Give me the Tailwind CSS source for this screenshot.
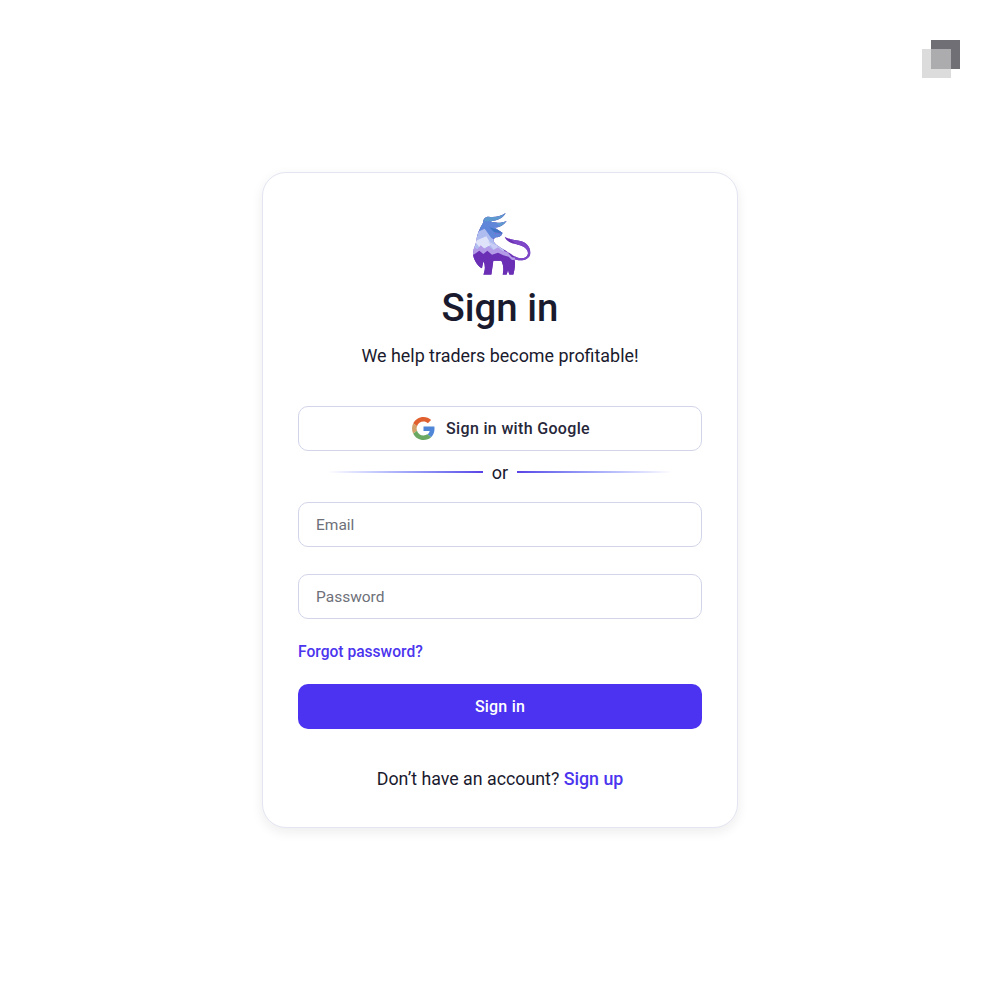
<!DOCTYPE html>
<html lang="en">
<head>
<meta charset="utf-8">
<title>Sign in</title>
<script src="https://cdn.jsdelivr.net/npm/@tailwindcss/browser@4"></script>
</head>
<body class="bg-white font-['Roboto',sans-serif] text-[#1a1a2e]">
<div class="relative h-[1000px] w-[1000px] flex justify-center pt-[172px]">
  <div class="absolute left-[922px] top-[40px] h-[38px] w-[38px]">
    <div class="absolute right-0 top-0 h-[29px] w-[29px] bg-[#6f6f75]"></div>
    <div class="absolute left-0 bottom-0 h-[29px] w-[29px] bg-[#cbcbcb]/67"></div>
  </div>
  <main class="h-[656px] w-[476px] rounded-[24px] border border-[#e3e5f2] bg-white px-[35px] pt-[35px] shadow-[0_4px_12px_rgba(20,20,43,0.08)] flex flex-col">
    <svg class="mx-auto h-[72px] w-[66px] shrink-0" viewBox="-3 0 198 216" aria-hidden="true">
      <defs>
        <clipPath id="bullshape">
          <path d="M45 45 C45 34 50 26 62 26 C78 28 98 26 113 15 C106 30 88 38 66 40 C82 46 100 46 116 39 C106 54 92 60 78 58 L103 74 C103 82 94 88 84 88 C78 90 76 96 78 102 C84 112 100 120 114 128 C126 136 138 146 150 149 C164 153 178 150 180 136 C180 122 166 114 150 110 C134 106 114 102 110 86 C122 94 142 96 160 100 C178 106 188 120 187 136 C186 150 172 157 158 157 C150 157 144 156 140 154 C142 170 140 186 136 200 L124 200 L120 186 L116 200 L104 200 C108 184 106 170 100 158 L76 158 C74 172 72 186 70 200 L46 200 C52 186 52 172 47 160 C45 166 43 172 42 181 C30 176 18 156 15 140 C14 126 22 114 25 100 C26 82 34 62 45 45 Z"/>
        </clipPath>
      </defs>
      <g clip-path="url(#bullshape)">
        <rect x="0" y="0" width="198" height="216" fill="#6a2fb4"/>
        <rect x="0" y="0" width="198" height="60" fill="#5e9ad0"/>
        <polygon points="30,40 80,40 110,70 100,92 20,92" fill="#5f86d8"/>
        <polygon points="10,80 50,62 70,90 90,100 110,130 10,130" fill="#aebcf0"/>
        <polygon points="20,100 55,85 70,110 40,125" fill="#dfe3fa"/>
        <polygon points="60,100 85,112 115,135 80,130" fill="#c9cdf5"/>
        <polygon points="0,150 0,130 18,118 28,124 38,112 50,122 62,114 76,126 90,118 104,128 118,132 132,148 150,150 150,156 60,156" fill="#b39be8"/>
        <polygon points="0,160 0,146 20,138 34,128 46,138 58,128 72,140 90,134 106,142 122,146 134,158 150,160 150,216 0,216" fill="#6a2fb4"/>
        <polygon points="108,80 198,80 198,170 145,170 140,146 160,120" fill="#7d47c8"/>
        <polygon points="64,58 104,70 104,78 78,72" fill="#3f74c4"/>
      </g>
      <circle cx="82" cy="76" r="1.500" fill="#a14fc4"/>
      <circle cx="90" cy="76" r="1.500" fill="#a14fc4"/>
      <circle cx="96" cy="75" r="1.500" fill="#a14fc4"/>
    </svg>
    <h1 class="mt-[3px] text-center text-[38.4px] leading-[50px] font-medium">Sign in</h1>
    <p class="mt-[9px] text-center text-[17.9px] leading-[28px]">We help traders become profitable!</p>
    <button class="mt-[36px] flex h-[45px] w-full items-center justify-center gap-[11px] rounded-[10px] border border-[#d2d5ea] bg-white pl-[2px] text-[16px] font-medium text-[#27273a] tracking-[0.33px]">
      <svg class="h-[23px] w-[23px]" viewBox="0 0 48 48" aria-hidden="true">
        <path fill="#e0602f" d="M24 9.5c3.5 0 6.7 1.3 9.1 3.5l6.8-6.8C35.8 2.4 30.2 0 24 0 14.6 0 6.5 5.4 2.6 13.2l7.900 6.200C12.400 13.600 17.700 9.500 24 9.500z"/>
        <path fill="#4f86d8" d="M47 24.500c0-1.600-.2-3.100-.4-4.500H24v9h12.900c-.6 3-2.200 5.500-4.700 7.200l7.700 6c4.500-4.200 7.100-10.300 7.100-17.700z"/>
        <path fill="#d3a26a" d="M10.500 28.600c-.5-1.400-.8-3-.8-4.600s.3-3.200.8-4.600l-7.900-6.200C.9 16.500 0 20.100 0 24s.9 7.500 2.600 10.800l7.900-6.200z"/>
        <path fill="#6aa864" d="M24 48c6.500 0 11.900-2.100 15.900-5.800l-7.700-6c-2.200 1.500-4.900 2.300-8.200 2.300-6.300 0-11.600-4.100-13.500-9.900l-7.900 6.200C6.500 42.600 14.600 48 24 48z"/>
      </svg>
      Sign in with Google
    </button>
    <div class="mt-[11px] flex h-[22px] items-center justify-center gap-[9px] text-[18px] leading-[22px]">
      <span class="mb-[2px] h-[2px] w-[155px] bg-gradient-to-r from-white to-[#5a42e6]"></span>
      <span>or</span>
      <span class="mb-[2px] h-[2px] w-[155px] bg-gradient-to-l from-white to-[#5a42e6]"></span>
    </div>
    <div class="mt-[18px] flex h-[45px] items-center rounded-[10px] border border-[#d2d5ea] px-[17px] pt-[2px] text-[15.5px] text-[#6e7079]">Email</div>
    <div class="mt-[27px] flex h-[45px] items-center rounded-[10px] border border-[#d2d5ea] px-[17px] pt-[2px] text-[15.5px] text-[#6e7079]">Password</div>
    <a class="mt-[23px] text-[15.6px] leading-[20px] font-medium text-[#4c35ee]" href="#">Forgot password?</a>
    <button class="mt-[22px] h-[45px] w-full rounded-[10px] bg-[#4c33f1] text-[16px] font-medium text-white tracking-[0.2px]">Sign in</button>
    <p class="mt-[38px] text-center text-[17.8px] leading-[24px]">Don’t have an account? <a class="font-medium text-[#4c35ee]" href="#">Sign up</a></p>
  </main>
</div>
</body>
</html>
